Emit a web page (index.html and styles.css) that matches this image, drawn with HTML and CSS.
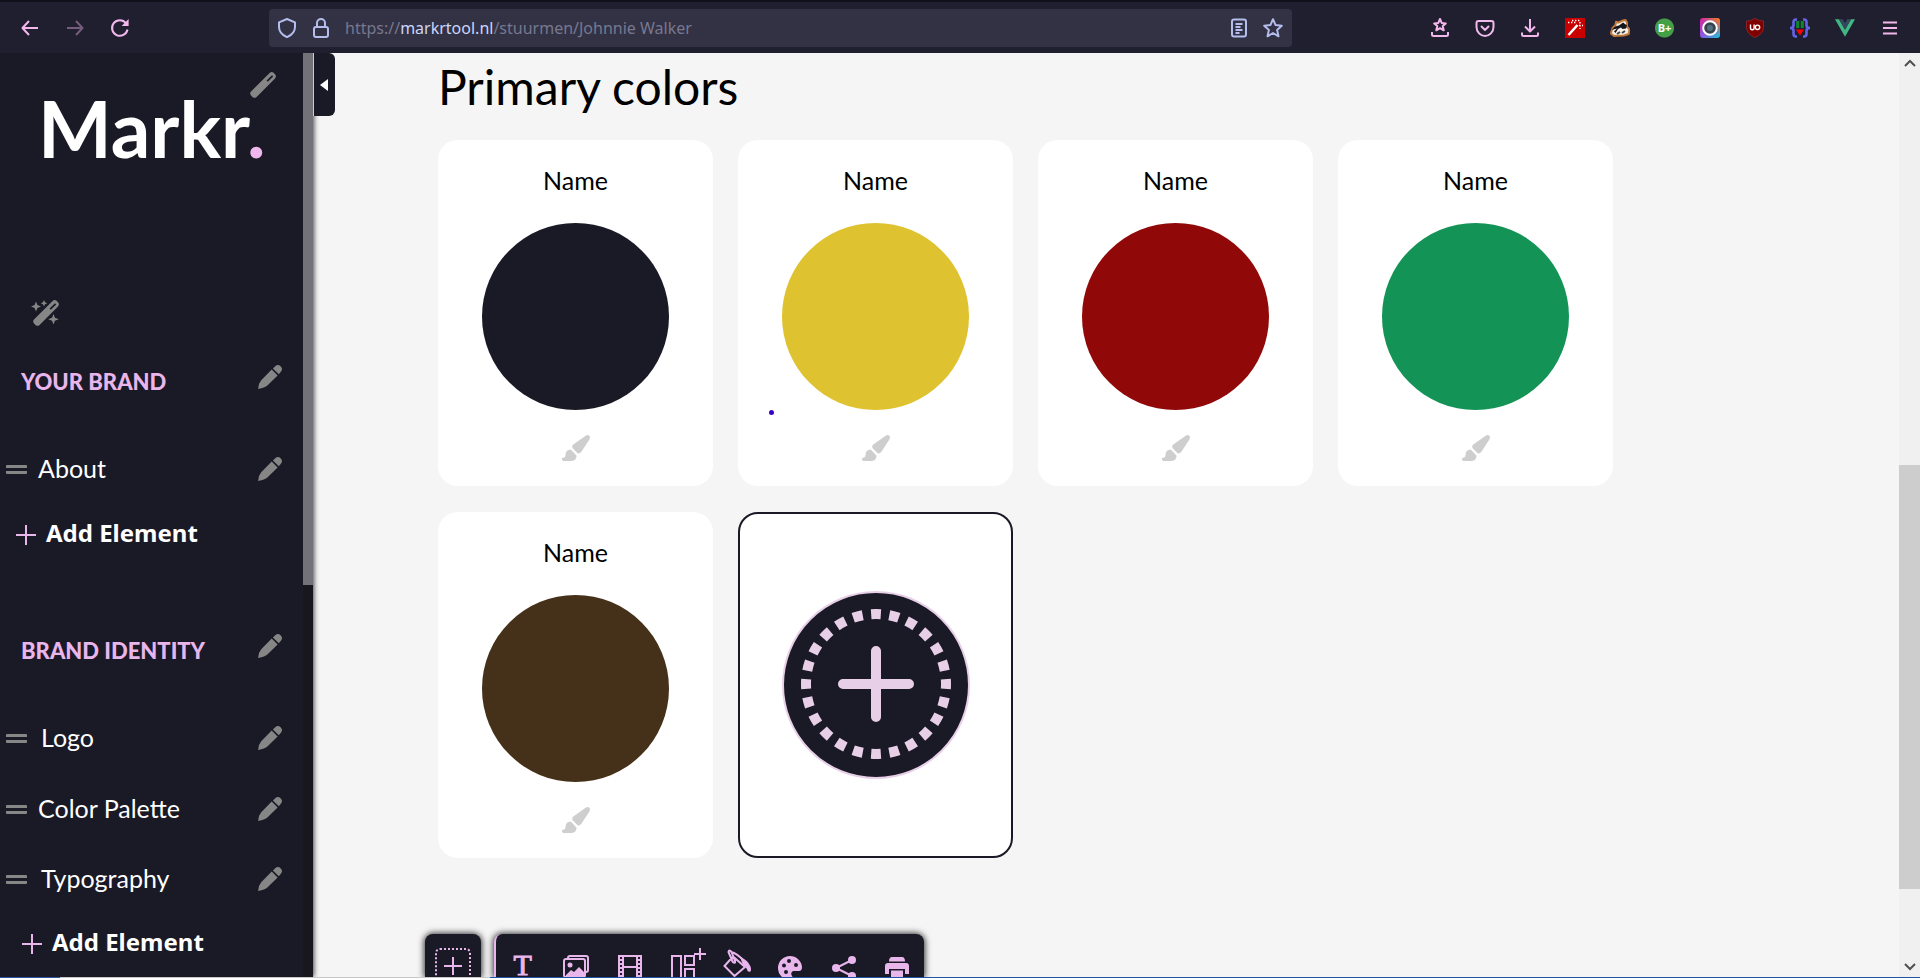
FILE: index.html
```html
<!DOCTYPE html>
<html lang="en">
<head>
<meta charset="utf-8">
<title>Markr</title>
<link rel="stylesheet" href="styles.css">
</head>
<body>
<svg class="defs" aria-hidden="true">
  <symbol id="pencil" viewBox="0 0 24 24"><path d="M13.7 4.6 19.6 10.4 9.4 20.6Q7 23 .2 24Q0 19 3.2 15.2ZM14.9 3.5 17.2 1.2Q20-1.2 22.8 1.4Q25.2 4.2 22.9 6.8L20.8 9.2Z"/></symbol>
  <symbol id="brush" viewBox="0 0 28 26"><path d="M24 .5Q26.200-.6 27.600 1Q28.400 2.400 27.400 4.400L19.200 17Q17 19.600 14.800 17.600L10.700 13.300Q9.400 11.200 11.300 9.400ZM8.800 14.500 14.600 20.700Q14.400 26 8.600 26H1.200Q-.8 24.800.4 22.800Q3.800 22.600 3.500 19.400Q4 14.800 8.800 14.500Z"/></symbol>
  <symbol id="wand" viewBox="0 0 26 26"><path fill-rule="evenodd" d="M19.600 1Q21.600-.8 23.600.8L25.200 2.400Q26.800 4.400 25 6.400L6.600 24.900Q4.600 26.600 2.700 25.200L.8 23.300Q-.6 21.400 1 19.600ZM22 3.200 16.600 8.500 17.800 9.700 23.200 4.400Z"/></symbol>
</svg>

<header class="browser">
  <nav class="history">
    <button class="tool" aria-label="Back"><svg width="18" height="18" viewBox="0 0 18 18"><path d="M17 9H1.500M8 2 1.500 9 8 16"/></svg></button>
    <button class="tool dim" aria-label="Forward" disabled><svg width="18" height="18" viewBox="0 0 18 18"><path d="M1 9h15.500M10 2l6.500 7-6.500 7"/></svg></button>
    <button class="tool" aria-label="Reload"><svg width="20" height="20" viewBox="0 0 20 20"><path d="M17.500 11.500A7.800 7.800 0 1 1 16 5.200"/><path class="solid" d="M18.600 1v7h-7Z"/></svg></button>
  </nav>
  <form class="address">
    <svg width="20" height="20" viewBox="0 0 20 20"><path d="M10 1 18 4.300V9c0 5-4 8.400-8 10.200C6 17.400 2 14 2 9V4.300Z"/></svg>
    <svg width="20" height="20" viewBox="0 0 20 20"><rect x="3" y="9" width="14" height="10" rx="2"/><path d="M6 9V5a4 4 0 0 1 8 0v4"/></svg>
    <a class="url" href="#">https://<b>markrtool.nl</b>/stuurmen/Johnnie Walker</a>
    <svg width="20" height="20" viewBox="0 0 20 20"><rect x="3" y="1.500" width="14" height="17" rx="2"/><path d="M6.500 6h7M6.500 9h5M6.500 12h7M6.500 15h4"/></svg>
    <svg width="20" height="20" viewBox="0 0 20 20"><path d="m10 1.200 2.600 5.900 6.200.6-4.700 4.200 1.400 6.400L10 15l-5.500 3.300 1.400-6.400L1.200 7.700l6.200-.6Z"/></svg>
  </form>
  <nav class="extensions">
    <button class="tool" aria-label="Bookmarks"><svg width="20" height="20" viewBox="0 0 20 20"><path d="m10 1 1.700 3.900 4.100.5-3.100 2.700 1 4.200L10 10.100l-3.700 2.200 1-4.200-3.100-2.700 4.100-.5ZM2 14v2.500q0 1.500 1.500 1.500h13q1.500 0 1.500-1.500V14"/></svg></button>
    <button class="tool" aria-label="Pocket"><svg width="20" height="20" viewBox="0 0 20 20"><path d="M3.500 3h13q2 0 2 2v4c0 5-4 9-8.500 9S1.500 14 1.500 9V5q0-2 2-2ZM6 8l4 4 4-4"/></svg></button>
    <button class="tool" aria-label="Downloads"><svg width="20" height="20" viewBox="0 0 20 20"><path d="M10 1v12M5 8.500l5 5 5-5M2 14.500v2q0 1.500 1.500 1.500h13q1.500 0 1.500-1.500v-2"/></svg></button>
    <button class="tool" aria-label="Magic wand"><svg class="art" width="20" height="20" viewBox="0 0 20 20"><path fill="#c80000" d="M0 0h20v20H0z"/><path fill="none" stroke="#fff" stroke-width="2.600" d="m3.500 17 9-10"/><path fill="none" stroke="#fff" stroke-width="1.400" stroke-dasharray="1.400 1.600" d="M3 4.500h9M7 2.500h8M14 7.500h4M15 4v7"/></svg></button>
    <button class="tool" aria-label="Privacy Badger"><svg class="art" width="20" height="20" viewBox="0 0 20 20"><path fill="#f4efe8" stroke="#c27a3c" d="M.8 15.500 2.500 10 5.500 7 6 3.800 8.500 4.500 12 2.800 15.500 2l1.500 2.500v4l2.500 3-.8 4.500-5 1.500L4 18Z"/><path fill="#15151c" d="M1.500 12 5 8.500 9 7.500 13 4.500 17 7.500 16 10.500 12.500 11 11 9.500 8 11 5.500 15 4 13.500 7 10.500Z"/><path fill="none" stroke="#444" d="m7 16 3-2M12 15l3-2"/></svg></button>
    <button class="tool bplus" aria-label="B plus">B+</button>
    <button class="tool" aria-label="Color picker"><svg class="art" width="20" height="20" viewBox="0 0 20 20"><defs><linearGradient id="rainbow" x1="0" y1="0" x2="1" y2="1"><stop offset="0" stop-color="#e0209a"/><stop offset=".5" stop-color="#8a5ae0"/><stop offset="1" stop-color="#18c8d8"/></linearGradient><linearGradient id="warm" x1="1" y1="0" x2="0" y2="1"><stop offset="0" stop-color="#ff7a00"/><stop offset=".5" stop-color="#ff7a00" stop-opacity="0"/></linearGradient></defs><rect width="20" height="20" rx="3" fill="url(#rainbow)"/><rect width="20" height="20" rx="3" fill="url(#warm)"/><circle cx="10" cy="10" r="6.800" fill="#39434d" stroke="#fff" stroke-width="2"/><circle cx="10" cy="10" r="3" fill="#55707e"/></svg></button>
    <button class="tool" aria-label="uBlock Origin"><svg class="art" width="18" height="20" viewBox="0 0 18 20"><path fill="#800000" stroke="#a33" stroke-width=".6" d="M9 .5Q13 3 17.500 3V10Q17 16 9 19.500Q1 16 .5 10V3Q5 3 9 .5Z"/><path fill="none" stroke="#fff" stroke-width="1.400" d="M4.500 6.500V10a1.800 1.800 0 0 0 3.600 0V6.500"/><circle cx="11.500" cy="9.300" r="2.200" fill="none" stroke="#fff" stroke-width="1.400"/></svg></button>
    <button class="tool" aria-label="Code helper"><svg class="art" width="20" height="20" viewBox="0 0 20 20"><path fill="none" stroke="#6464e6" stroke-width="2.600" d="M7 1.500H6Q3.500 1.500 3.500 4v3.500Q3.500 10 0 10Q3.500 10 3.500 12.500V16q0 2.500 2.500 2.500h1M13 1.500h1q2.500 0 2.500 2.500v3.500q0 2.500 3.500 2.500Q16.500 10 16.500 12.500V16q0 2.500-2.500 2.500h-1"/><path fill="#0b8a2c" d="M6.200 3h3v7h-3zM10.800 3h3v7h-3z"/><path fill="#f00" d="M6 11.500h8L10 17.500Z"/></svg></button>
    <button class="tool" aria-label="Vue"><svg class="art" width="20" height="20" viewBox="0 0 20 20"><path fill="#41b883" d="M0 1.300h4L10 11.700 16 1.300h4L10 18.700Z"/><path fill="#35495e" d="M4 1.300h3.800L10 5.200l2.200-3.900H16L10 11.700Z"/></svg></button>
    <button class="tool" aria-label="Menu"><svg width="20" height="20" viewBox="0 0 20 20"><path d="M3 4.500h14M3 10h14M3 15.500h14"/></svg></button>
  </nav>
</header>

<div class="page">
  <aside class="sidebar">
    <div class="menu">
      <div class="brand">
        <h1 class="logo">Markr<span class="dot">.</span></h1>
        <button class="icon logo-edit" aria-label="Edit logo"><svg width="26" height="26"><use href="#wand"/></svg></button>
      </div>
      <button class="icon magic" aria-label="Theme"><svg width="28" height="26" viewBox="0 0 28 26"><svg x="2" y="0" width="26" height="26"><use href="#wand"/></svg><path d="M5 1.500 6.400 5 10 6.500 6.400 8 5 11.500 3.600 8 0 6.500 3.600 5ZM13 0l1 2.200 2.300 1-2.300 1L13 6.400l-1-2.200-2.300-1 2.300-1ZM22.500 14l1.400 3.700 3.900 1.500-3.900 1.500L22.500 24.500 21 20.700 17.200 19.200 21 17.700Z"/></svg></button>
      <section class="group">
        <h2 class="row heading"><span>YOUR BRAND</span><button class="icon" aria-label="Edit section"><svg width="24" height="24"><use href="#pencil"/></svg></button></h2>
        <div class="row"><i class="grip"></i><a class="label about" href="#">About</a><button class="icon" aria-label="Edit About"><svg width="24" height="24"><use href="#pencil"/></svg></button></div>
        <button class="add"><svg width="20" height="20" viewBox="0 0 20 20"><path d="M10 0v20M0 10h20"/></svg>Add Element</button>
      </section>
      <section class="group second">
        <h2 class="row heading"><span>BRAND IDENTITY</span><button class="icon" aria-label="Edit section"><svg width="24" height="24"><use href="#pencil"/></svg></button></h2>
        <div class="row"><i class="grip"></i><a class="label" href="#">Logo</a><button class="icon" aria-label="Edit Logo"><svg width="24" height="24"><use href="#pencil"/></svg></button></div>
        <div class="row"><i class="grip"></i><a class="label about" href="#">Color Palette</a><button class="icon" aria-label="Edit Color Palette"><svg width="24" height="24"><use href="#pencil"/></svg></button></div>
        <div class="row"><i class="grip"></i><a class="label" href="#">Typography</a><button class="icon" aria-label="Edit Typography"><svg width="24" height="24"><use href="#pencil"/></svg></button></div>
        <button class="add"><svg width="20" height="20" viewBox="0 0 20 20"><path d="M10 0v20M0 10h20"/></svg>Add Element</button>
      </section>
    </div>
    <div class="side-track"><div class="side-thumb"></div></div>
  </aside>
  <button class="collapse" aria-label="Collapse sidebar"><svg width="8" height="12" viewBox="0 0 8 12"><path d="M8 0v12L0 6Z"/></svg></button>

  <main class="content">
    <h2 class="title">Primary colors</h2>
    <div class="palette">
      <article class="card"><h3>Name</h3><div class="swatch navy"></div><button class="paint" aria-label="Edit color"><svg width="28" height="26"><use href="#brush"/></svg></button></article>
      <article class="card"><h3>Name</h3><div class="swatch yellow"></div><button class="paint" aria-label="Edit color"><svg width="28" height="26"><use href="#brush"/></svg></button><i class="pointer"></i></article>
      <article class="card"><h3>Name</h3><div class="swatch red"></div><button class="paint" aria-label="Edit color"><svg width="28" height="26"><use href="#brush"/></svg></button></article>
      <article class="card"><h3>Name</h3><div class="swatch green"></div><button class="paint" aria-label="Edit color"><svg width="28" height="26"><use href="#brush"/></svg></button></article>
      <article class="card"><h3>Name</h3><div class="swatch brown"></div><button class="paint" aria-label="Edit color"><svg width="28" height="26"><use href="#brush"/></svg></button></article>
      <button class="card new" aria-label="Add color"><svg width="188" height="188" viewBox="0 0 188 188"><circle cx="94" cy="94" r="93" fill="#1a1926" stroke="#e8cfe8" stroke-width="2"/><circle cx="94" cy="93" r="70" pathLength="240" fill="none" stroke="#e8cfe8" stroke-width="10" stroke-dasharray="5.400 4.600" stroke-dashoffset="2.700"/><path fill="none" stroke="#e8cfe8" stroke-width="10" stroke-linecap="round" d="M94 60v66M61 93h66"/></svg></button>
    </div>
  </main>

  <div class="scrollbar">
    <svg width="12" height="8" viewBox="0 0 12 8"><path d="M1 7 6 2l5 5"/></svg>
    <div class="track"><div class="thumb"></div></div>
    <svg width="12" height="8" viewBox="0 0 12 8"><path d="m1 1 5 5 5-5"/></svg>
  </div>

  <div class="dock">
    <button class="dock-add" aria-label="Add block"><svg width="36" height="36" viewBox="0 0 36 36"><rect x="1" y="1" width="34" height="34" rx="4" stroke-dasharray="2 2"/><path d="M18 9v18M9 18h18"/></svg></button>
    <div class="dock-tools">
      <button class="text-tool" aria-label="Text">T</button>
      <button aria-label="Images"><svg width="26" height="26" viewBox="0 0 26 26"><path d="M5 4V3q0-2 2-2h16q2 0 2 2v12q0 2-2 2"/><rect x="1" y="4" width="21" height="18" rx="2"/><circle class="solid" cx="7" cy="10" r="2.500"/><path class="solid" d="m3 20 5-5 3 2 5-5 5 5v4H3Z"/></svg></button>
      <button aria-label="Video"><svg width="26" height="26" viewBox="0 0 26 26"><path d="M2 1h22v24H2ZM6 1v24M20 1v24M6 12h14M2 5h4M2 9h4M2 13h4M2 17h4M2 21h4M20 5h4M20 9h4M20 13h4M20 17h4M20 21h4"/></svg></button>
      <button aria-label="Layout"><svg class="tall" width="48" height="34" viewBox="-12 0 48 34"><path d="M1 8h9v25H1ZM14 8h9v9h-9ZM14 21h9v11h-9ZM29 0v12M23 6h12"/></svg></button>
      <button aria-label="Fill"><svg class="tall" width="28" height="30" viewBox="0 0 28 30"><path d="M10 8.500 1.500 18 11.500 28 22 19ZM8 4Q14 5 22 14M5.500 4Q6 1 8.500 4L12 13Q12.500 16 9.800 14Z"/><path class="solid" d="M17 9q8 3 10.500 9.500 1 3 0 5-3 1-3.500-2Q23 18 20 17Z"/></svg></button>
      <button aria-label="Colors"><svg width="26" height="26" viewBox="0 0 26 26"><path class="solid" fill-rule="evenodd" d="M13 1a12 12 0 1 0 0 24q4-1 2-4t1-5h6q3 0 3-4A12 12 0 0 0 13 1ZM7 8.500a2 2 0 1 1 0 4 2 2 0 0 1 0-4ZM12 4a2 2 0 1 1 0 4 2 2 0 0 1 0-4ZM19 8a2 2 0 1 1 0 4 2 2 0 0 1 0-4ZM9 15a2 2 0 1 1 0 4 2 2 0 0 1 0-4Z"/></svg></button>
      <button aria-label="Share"><svg width="26" height="26" viewBox="0 0 26 26"><path d="M21 5 5 13l16 8"/><circle class="solid" cx="21" cy="5" r="4"/><circle class="solid" cx="5" cy="13" r="4"/><circle class="solid" cx="21" cy="21" r="4"/></svg></button>
      <button aria-label="Print"><svg width="26" height="26" viewBox="0 0 26 26"><path class="solid" d="M5 6.500Q5 2 8 2h10q3 0 3 4.500ZM4 8h18q3 0 3 3v8h-4v-5H5v5H1v-8q0-3 3-3Z"/><path class="solid" d="M7 15.500h12v8H7Z"/></svg></button>
    </div>
  </div>
</div>
<footer class="edge"></footer>
</body>
</html>
```
FILE: styles.css
```css
* { box-sizing: border-box; }
body {
  margin: 0;
  height: 100vh;
  display: flex;
  flex-direction: column;
  overflow: hidden;
  font-family: Lato, "Open Sans", sans-serif;
  background: #f5f5f5;
}
button {
  display: flex;
  align-items: center;
  justify-content: center;
  padding: 0;
  border: 0;
  background: none;
  font: inherit;
  color: inherit;
}
a { color: inherit; text-decoration: none; }
h1, h2, h3 { margin: 0; font-weight: 400; }
svg { display: block; flex: none; }
.defs { position: absolute; width: 0; height: 0; }

/* Browser toolbar */
.browser {
  flex: none;
  display: flex;
  align-items: center;
  height: 53px;
  border-top: 2px solid #12111b;
  background: #201f2f;
}
.history { display: flex; width: 269px; padding-left: 7px; }
.tool { width: 45px; height: 36px; }
.browser svg { fill: none; stroke: #f2b8ec; stroke-width: 2; stroke-linejoin: round; }
.browser .art, .browser .solid { stroke: none; }
.browser .solid { fill: #f2b8ec; }
.dim { opacity: .4; }
.address {
  flex: 0 1 1023px;
  display: flex;
  align-items: center;
  gap: 14px;
  height: 38px;
  padding: 0 9px 0 8px;
  border-radius: 4px;
  background: #323244;
}
.browser .address svg { stroke: #b4bdec; }
.url {
  flex: 1;
  font: 16px/24px "Noto Sans", "Open Sans", sans-serif;
  color: #77788f;
  white-space: nowrap;
}
.url b { font-weight: 400; color: #cdd5fb; }
.extensions { display: flex; margin-left: auto; padding-right: 8px; }
.bplus {
  font: bold 11px "Open Sans", sans-serif;
  color: #fff;
  background: radial-gradient(circle, #43a047 9px, transparent 10px);
}

/* Page */
.page { position: relative; flex: 1; min-height: 0; display: flex; overflow: hidden; }
.sidebar {
  flex: none;
  display: flex;
  width: 313px;
  background: #1a1926;
  box-shadow: 1px 0 5px #444;
}
.menu { flex: 1; padding-left: 6px; overflow: hidden; }
.side-track { width: 10px; background: #18171f; }
.side-thumb { height: 532px; background: #727278; }
.brand { position: relative; height: 247px; padding: 28px 0 0 32px; }
.logo { font-size: 78px; line-height: 94px; font-weight: 700; color: #fff; }
.dot { color: #f0b6ee; }
.icon { color: #868686; fill: #868686; }
.logo-edit { position: absolute; right: 27px; top: 19px; }
.magic { margin-left: 25px; }
.group { margin-top: 15px; }
.second { margin-top: 50px; }
.row { display: flex; align-items: center; height: 70px; padding-right: 21px; }
.row .icon { margin-left: auto; }
.heading {
  height: 72px;
  padding-left: 15px;
  font-size: 22px;
  font-weight: 900;
  color: #e9b6ec;
}
.heading + .row { margin-top: 20px; height: 72px; }
.heading span { padding-top: 8px; }
.grip { width: 21px; height: 9px; border: solid #868686; border-width: 3px 0; border-radius: 1px; }
.label { padding: 0 0 2px 14px; font-size: 25px; line-height: 32px; color: #fff; }
.about { padding-left: 11px; }
.add {
  gap: 10px;
  margin-left: 10px;
  height: 55px;
  font: bold 24px/32px "Noto Sans", "Open Sans", sans-serif;
  color: #fff;
}
.second .add { margin-left: 16px; }
.add svg { margin-top: 5px; stroke: #e9b6ec; stroke-width: 2; }
.collapse {
  flex: none;
  width: 22px;
  height: 63px;
  padding-right: 2px;
  border-left: 1px solid #e9b6ec;
  border-radius: 0 6px 6px 0;
  background: #1a1926;
  fill: #fff;
  z-index: 1;
}
.content { flex: 1; padding: 7px 0 0 103px; }
.title { font-size: 48px; line-height: 54px; color: #000; }
.palette {
  display: grid;
  grid-template-columns: repeat(auto-fill, 275px);
  gap: 26px 25px;
  max-width: 1200px;
  margin-top: 26px;
}
.card {
  position: relative;
  display: flex;
  flex-direction: column;
  align-items: center;
  height: 346px;
  padding-top: 23px;
  border-radius: 20px;
  background: #fff;
}
.card h3 { font-size: 25px; line-height: 34px; color: #000; }
.swatch { width: 187px; height: 187px; margin-top: 26px; border-radius: 50%; }
.navy { background: #1a1926; }
.yellow { background: #dfc22f; }
.red { background: #910808; }
.green { background: #139456; }
.brown { background: #453119; }
.paint { margin-top: 25px; fill: #cecece; }
.pointer { position: absolute; left: 31px; top: 270px; width: 5px; height: 5px; border-radius: 50%; background: #3a00c4; }
.new { justify-content: center; padding: 0; border: 2px solid #1a1926; }

/* Window scrollbar */
.scrollbar {
  flex: none;
  display: flex;
  flex-direction: column;
  align-items: center;
  width: 21px;
  padding: 6px 0;
  background: #f0f0f0;
}
.scrollbar svg { fill: none; stroke: #505050; stroke-width: 2; }
.track { flex: 1; align-self: stretch; padding-top: 398px; }
.thumb { height: 424px; background: #cdcdcd; }

/* Floating toolbar */
.dock { position: absolute; left: 425px; bottom: 0; display: flex; gap: 13px; height: 43px; }
.dock-add, .dock-tools {
  border-radius: 8px 8px 0 0;
  background: #1a1926;
  box-shadow: 0 0 6px 1px #333;
}
.dock-add { width: 56px; align-items: flex-start; padding-top: 14px; }
.dock-tools { display: flex; width: 430px; border-left: 2px solid #e9b6ec; }
.dock button { color: #e9b6ec; }
.dock-tools button { flex: 1; align-items: flex-start; padding-top: 21px; }
.dock svg { fill: none; stroke: #e9b6ec; stroke-width: 2; }
.dock .solid { fill: #e9b6ec; stroke: none; }
.dock .tall { margin-top: -7px; }
.dock .text-tool { padding-top: 20px; font: 30px/22px "Liberation Serif", serif; -webkit-text-stroke: 1px #e9b6ec; }
.edge { flex: none; height: 1px; background: linear-gradient(90deg, #2d55a4 60px, #c8c8c8 60px, #c8c8c8 490px, #1f55a5 490px); }
```
